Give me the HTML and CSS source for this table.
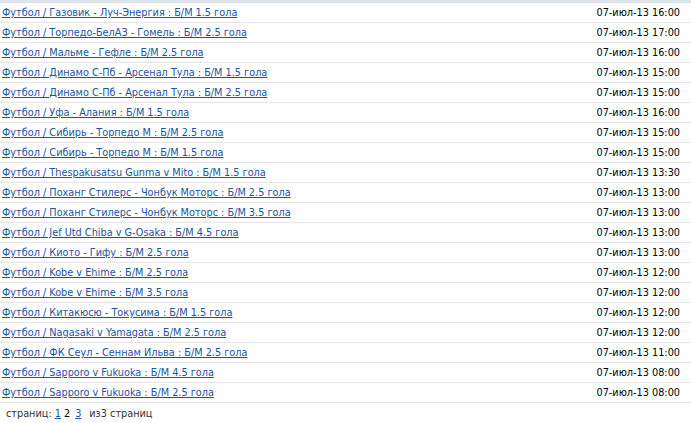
FILE: index.html
```html
<!DOCTYPE html>
<html>
<head>
<meta charset="utf-8">
<link rel="stylesheet" href="styles.css">
</head>
<body>
<div class="topbar"></div>
<div class="list">
  <div class="row"><a href="#">Футбол / Газовик - Луч-Энергия : Б/М 1.5 гола</a><span class="date">07-июл-13 16:00</span></div>
  <div class="row"><a href="#">Футбол / Торпедо-БелАЗ - Гомель : Б/М 2.5 гола</a><span class="date">07-июл-13 17:00</span></div>
  <div class="row"><a href="#">Футбол / Мальме - Гефле : Б/М 2.5 гола</a><span class="date">07-июл-13 16:00</span></div>
  <div class="row"><a href="#">Футбол / Динамо С-Пб - Арсенал Тула : Б/М 1.5 гола</a><span class="date">07-июл-13 15:00</span></div>
  <div class="row"><a href="#">Футбол / Динамо С-Пб - Арсенал Тула : Б/М 2.5 гола</a><span class="date">07-июл-13 15:00</span></div>
  <div class="row"><a href="#">Футбол / Уфа - Алания : Б/М 1.5 гола</a><span class="date">07-июл-13 16:00</span></div>
  <div class="row"><a href="#">Футбол / Сибирь - Торпедо М : Б/М 2.5 гола</a><span class="date">07-июл-13 15:00</span></div>
  <div class="row"><a href="#">Футбол / Сибирь - Торпедо М : Б/М 1.5 гола</a><span class="date">07-июл-13 15:00</span></div>
  <div class="row"><a href="#">Футбол / Thespakusatsu Gunma v Mito : Б/М 1.5 гола</a><span class="date">07-июл-13 13:30</span></div>
  <div class="row"><a href="#">Футбол / Поханг Стилерс - Чонбук Моторс : Б/М 2.5 гола</a><span class="date">07-июл-13 13:00</span></div>
  <div class="row"><a href="#">Футбол / Поханг Стилерс - Чонбук Моторс : Б/М 3.5 гола</a><span class="date">07-июл-13 13:00</span></div>
  <div class="row"><a href="#">Футбол / Jef Utd Chiba v G-Osaka : Б/М 4.5 гола</a><span class="date">07-июл-13 13:00</span></div>
  <div class="row"><a href="#">Футбол / Киото - Гифу : Б/М 2.5 гола</a><span class="date">07-июл-13 13:00</span></div>
  <div class="row"><a href="#">Футбол / Kobe v Ehime : Б/М 2.5 гола</a><span class="date">07-июл-13 12:00</span></div>
  <div class="row"><a href="#">Футбол / Kobe v Ehime : Б/М 3.5 гола</a><span class="date">07-июл-13 12:00</span></div>
  <div class="row"><a href="#">Футбол / Китакюсю - Токусима : Б/М 1.5 гола</a><span class="date">07-июл-13 12:00</span></div>
  <div class="row"><a href="#">Футбол / Nagasaki v Yamagata : Б/М 2.5 гола</a><span class="date">07-июл-13 12:00</span></div>
  <div class="row"><a href="#">Футбол / ФК Сеул - Сеннам Ильва : Б/М 2.5 гола</a><span class="date">07-июл-13 11:00</span></div>
  <div class="row"><a href="#">Футбол / Sapporo v Fukuoka : Б/М 4.5 гола</a><span class="date">07-июл-13 08:00</span></div>
  <div class="row"><a href="#">Футбол / Sapporo v Fukuoka : Б/М 2.5 гола</a><span class="date">07-июл-13 08:00</span></div>
</div>
<div class="pager">страниц: <a href="#">1</a><span class="cur">2</span><a href="#" class="last">3</a>из3 страниц</div>
</body>
</html>
```
FILE: styles.css
```css
html, body {
  margin: 0;
  padding: 0;
  background: #fff;
}
body {
  font-family: "DejaVu Sans Condensed", "DejaVu Sans", sans-serif;
  font-size: 10.8px;
  color: #000;
}
.topbar {
  height: 3px;
  background: #dde5eb;
}
.list {
  display: flex;
  flex-direction: column;
}
.row {
  height: 19px;
  border-bottom: 1px solid #e6e6e6;
  display: flex;
  align-items: center;
  justify-content: space-between;
  padding: 0 11px 0 2px;
}
.row a, .pager a {
  color: #1a55a0;
  text-decoration: underline;
}
.date {
  color: #000;
}
.pager {
  padding: 4px 0 0 6px;
  color: #333;
}
.cur {
  color: #000;
  margin: 0 5px 0 3px;
}
.last {
  margin-right: 8px;
}
```
